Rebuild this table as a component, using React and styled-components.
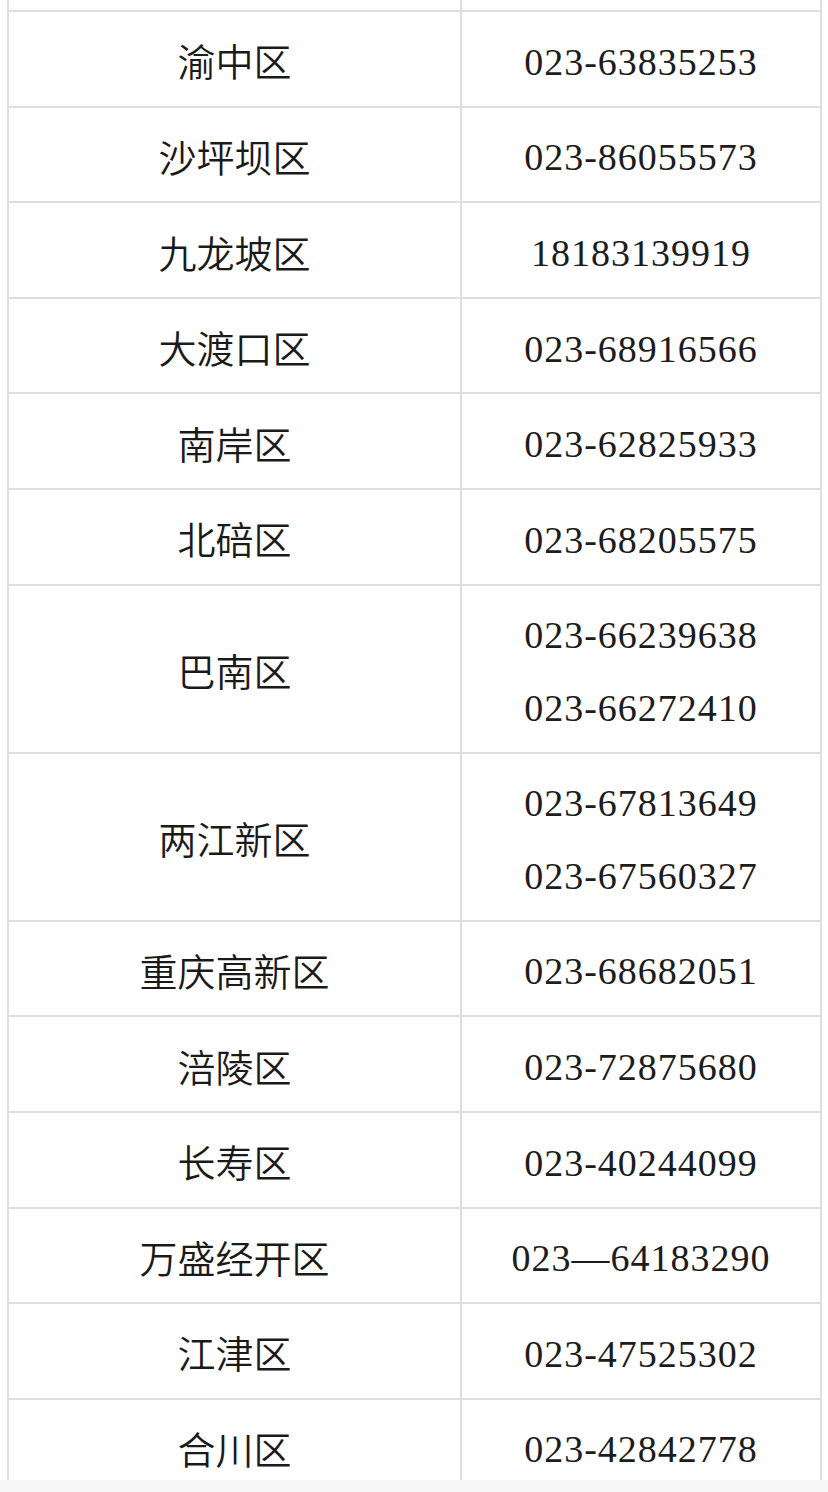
import React from 'react'
import styled, { createGlobalStyle } from 'styled-components'

const rows = [
  { area: '渝中区', phones: ['023-63835253'] },
  { area: '沙坪坝区', phones: ['023-86055573'] },
  { area: '九龙坡区', phones: ['18183139919'] },
  { area: '大渡口区', phones: ['023-68916566'] },
  { area: '南岸区', phones: ['023-62825933'] },
  { area: '北碚区', phones: ['023-68205575'] },
  { area: '巴南区', phones: ['023-66239638', '023-66272410'] },
  { area: '两江新区', phones: ['023-67813649', '023-67560327'] },
  { area: '重庆高新区', phones: ['023-68682051'] },
  { area: '涪陵区', phones: ['023-72875680'] },
  { area: '长寿区', phones: ['023-40244099'] },
  { area: '万盛经开区', phones: ['023—64183290'] },
  { area: '江津区', phones: ['023-47525302'] },
  { area: '合川区', phones: ['023-42842778'] },
]

const GlobalStyle = createGlobalStyle`
  html, body {
    margin: 0;
    padding: 0;
    background: #f6f6f6;
  }
`

const Page = styled.div`
  width: 828px;
  height: 1480px;
  overflow: hidden;
  background: #fff;
`

const Table = styled.div`
  margin-left: 7px;
  width: 815px;
  border-left: 2px solid #dedede;
  border-right: 2px solid #dedede;
  box-sizing: border-box;
`

const Row = styled.div`
  display: grid;
  grid-template-columns: 451px 1fr;
  height: ${p => p.$h}px;
  border-bottom: 2px solid #dedede;
  box-sizing: border-box;
`

const Cell = styled.div`
  display: flex;
  flex-direction: column;
  align-items: center;
  justify-content: center;
  padding-top: ${p => (p.$stub ? 0 : 7)}px;
  box-sizing: border-box;
  border-left: ${p => (p.$divide ? '2px solid #dedede' : 'none')};
`

const Area = styled.span`
  font-family: "Noto Sans CJK SC", "Noto Sans", sans-serif;
  font-size: 38px;
  font-weight: 350;
  line-height: 73px;
  margin-top: -5px;
  color: #1a1a1a;
`

const Phone = styled.span`
  font-family: "Liberation Serif", "Times New Roman", serif;
  font-size: 38px;
  letter-spacing: 1px;
  line-height: 73px;
  color: #1c1c1c;
`

export default function App() {
  return (
    <Page>
      <GlobalStyle />
      <Table>
        <Row $h={12}>
          <Cell $stub />
          <Cell $stub $divide />
        </Row>
        {rows.map((r, i) => (
          <Row key={r.area} $h={r.phones.length > 1 ? 168 : i % 2 ? 95.4 : 95.8}>
            <Cell>
              <Area>{r.area}</Area>
            </Cell>
            <Cell $divide>
              {r.phones.map(p => (
                <Phone key={p}>{p}</Phone>
              ))}
            </Cell>
          </Row>
        ))}
      </Table>
    </Page>
  )
}
